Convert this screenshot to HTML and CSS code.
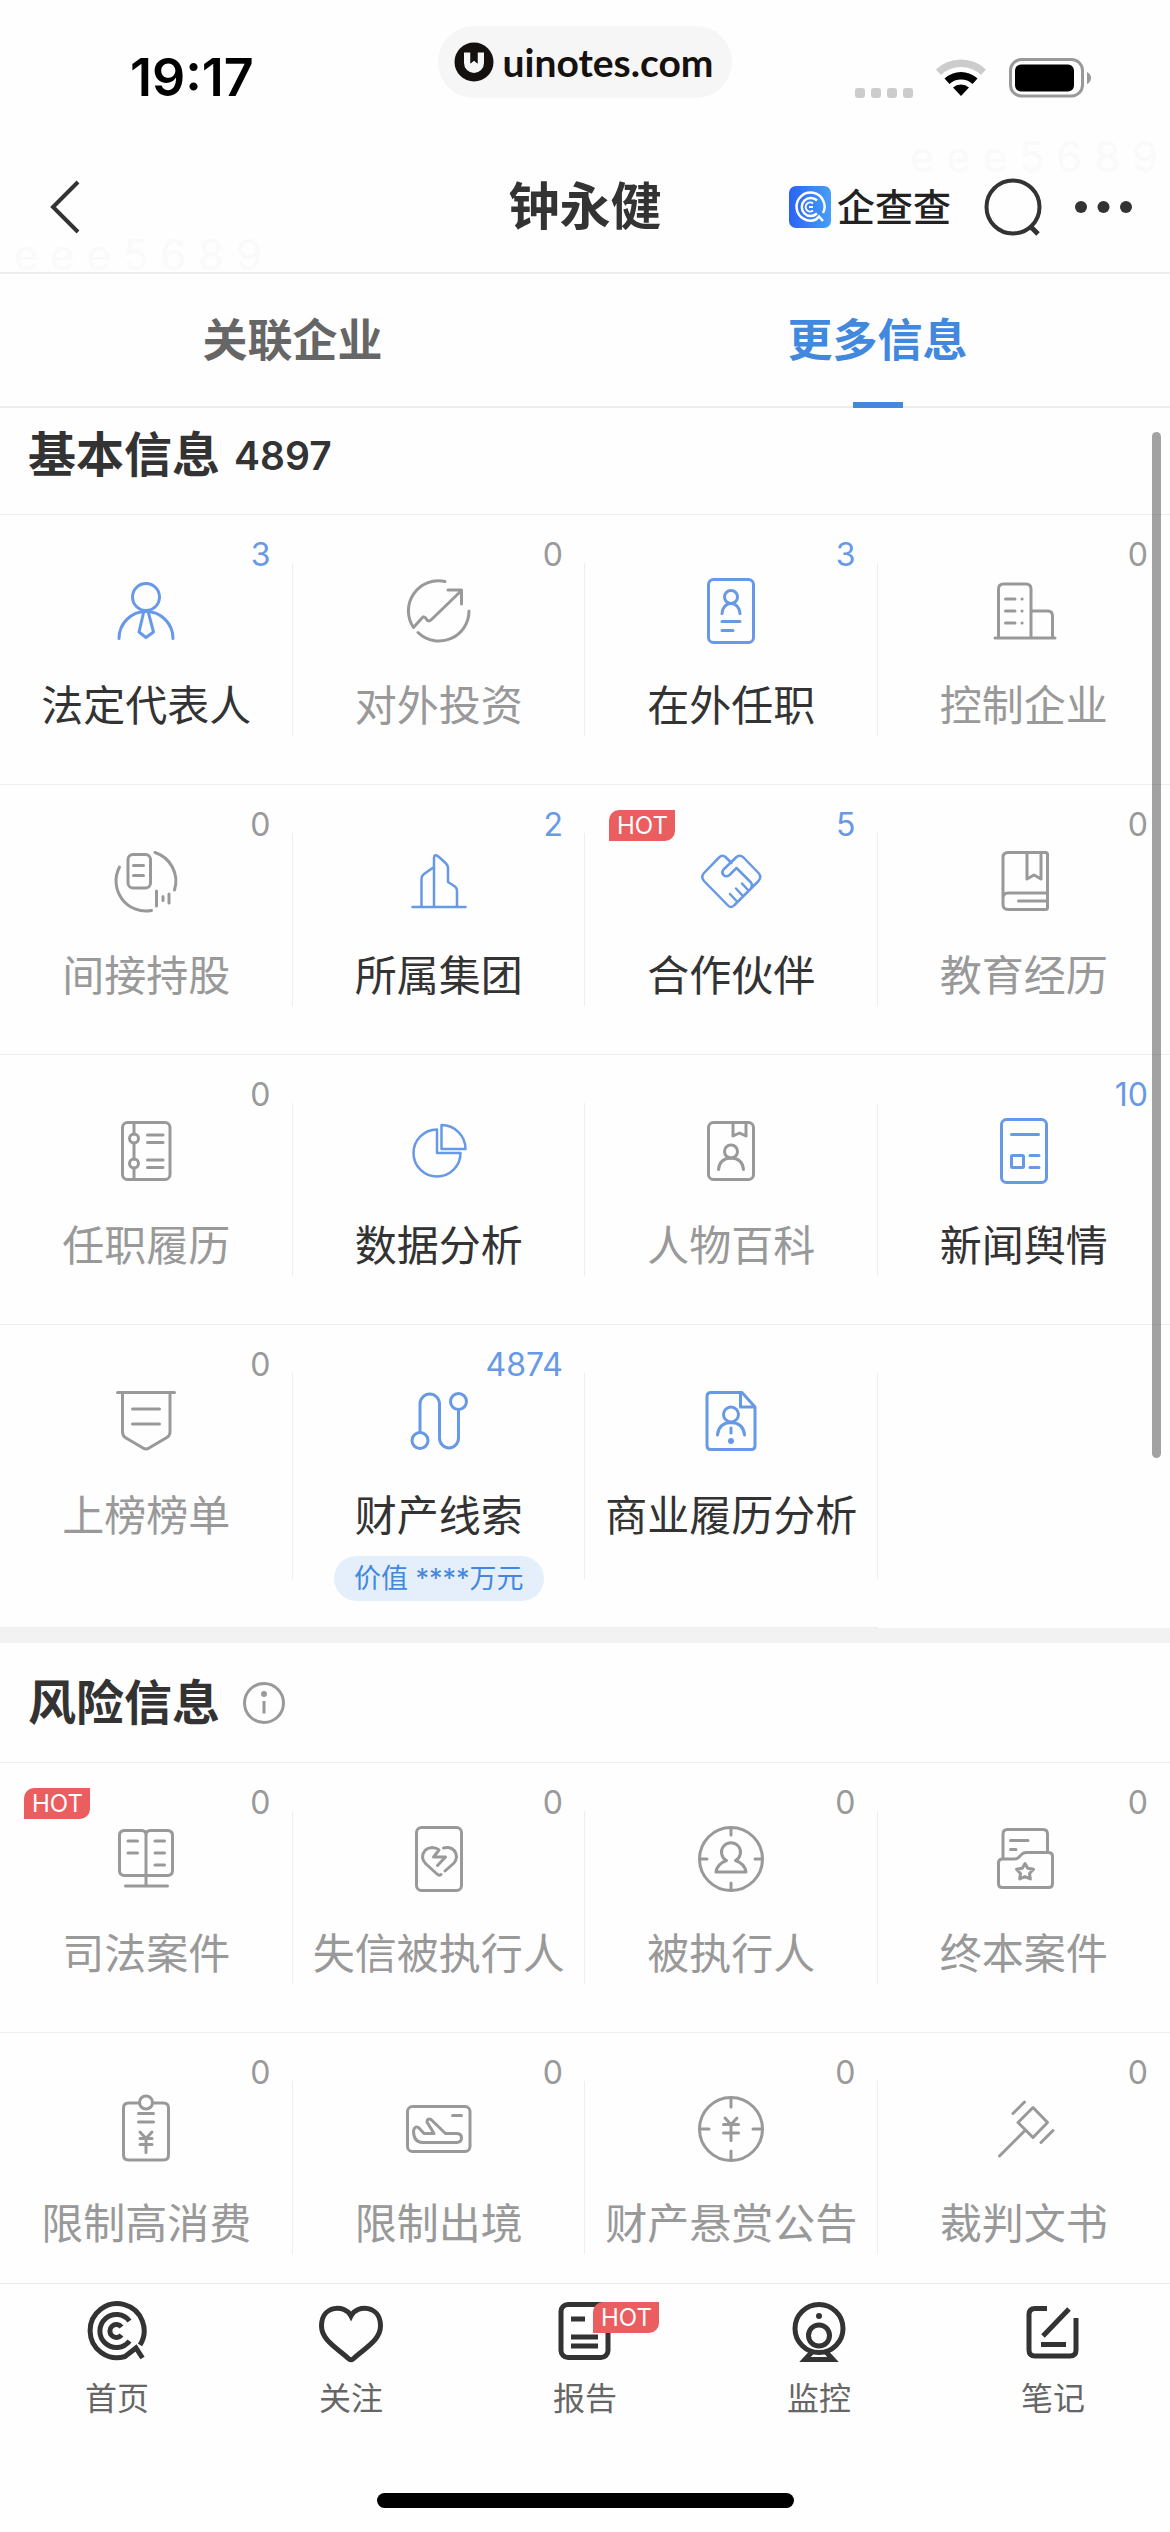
FILE: index.html
```html
<!DOCTYPE html>
<html lang="zh-CN">
<head>
<meta charset="utf-8">
<meta name="viewport" content="width=device-width, initial-scale=1">
<title>钟永健 - 更多信息</title>
<link rel="stylesheet" href="styles.css">
</head>
<body>
<div class="app">
  <div class="status">
    <span class="status-time">19:17</span>
    <div class="pill">
      <svg class="pill-logo" width="40" height="40" viewBox="0 0 40 40" aria-hidden="true"><circle cx="20" cy="20" r="19.500" fill="#15110f"/><path d="M10 10.500h6.500v11l3.500-3 3.500 3v-11H30V21a10 10 0 0 1-20 0z" fill="#f6f6f6"/><path d="M16.500 10h7v11.500l-3.500-3-3.500 3z" fill="#15110f"/></svg>
      <span>uinotes.com</span>
    </div>
    <div class="status-icons">
      <svg class="signal" width="58" height="10" viewBox="0 0 58 10" fill="#ccc" aria-hidden="true"><rect width="10" height="10" rx="3"/><rect x="16" width="10" height="10" rx="3"/><rect x="32" width="10" height="10" rx="3"/><rect x="48" width="10" height="10" rx="3"/></svg>
      <svg width="50" height="38" viewBox="0 0 50 38" aria-hidden="true"><path d="M0 10.500A36 36 0 0 1 50 10.500L45 16A29 29 0 0 0 5 16Z" fill="#ccc"/><path d="M8.500 19.500A24 24 0 0 1 41.500 19.500L36.500 25A17 17 0 0 0 13.500 25Z"/><path d="M17 28.500A12 12 0 0 1 33 28.500L25 37Z"/></svg>
      <svg width="83" height="40" viewBox="0 0 83 40" aria-hidden="true"><rect x="1.500" y="1.500" width="72" height="36.500" rx="11" fill="none" stroke="#999" stroke-width="3"/><rect x="6" y="6.500" width="59" height="27" rx="6"/><path d="M78 14q4 2 4 6t-4 6z" fill="#999"/></svg>
    </div>
  </div>

  <header class="nav">
    <button class="icon-btn back" type="button" aria-label="返回"><svg width="30" height="54" viewBox="0 0 30 54"><path d="M28 2 3 27 28 52"/></svg></button>
    <h1 class="nav-title">钟永健</h1>
    <div class="nav-actions">
      <a class="brand" href="#">
        <svg width="42" height="42" viewBox="0 0 42 42" aria-hidden="true"><defs><linearGradient id="brand-bg" x1="0" x2="1"><stop offset="0" stop-color="#2b63f3"/><stop offset="1" stop-color="#479ef8"/></linearGradient></defs><rect width="42" height="42" rx="7" fill="url(#brand-bg)"/><g fill="none" stroke="#fff" stroke-width="2.500"><path d="M34 27A14 14 0 1 0 27 33.500l3-3 4 4.500"/><path d="M28 14.500a9 9 0 1 0 0 13"/><path d="M24 17.500a4.500 4.500 0 1 0 0 7M20 21h4" stroke-width="2"/></g></svg>
        <span>企查查</span>
      </a>
      <button class="icon-btn" type="button" aria-label="搜索"><svg width="58" height="58" viewBox="0 0 58 58"><circle cx="29" cy="29" r="26.500"/><path d="M47 49l7 7" stroke-width="5"/></svg></button>
      <button class="icon-btn" type="button" aria-label="更多"><svg width="57" height="12" viewBox="0 0 57 12" class="dots"><circle cx="6" cy="6" r="6"/><circle cx="28.500" cy="6" r="6"/><circle cx="51" cy="6" r="6"/></svg></button>
    </div>
    <span class="watermark watermark-top" aria-hidden="true">e e e 5 6 8 9</span>
    <span class="watermark watermark-bottom" aria-hidden="true">e e e 5 6 8 9</span>
  </header>

  <nav class="tabs">
    <a class="tab" href="#">关联企业</a>
    <a class="tab is-active" href="#" aria-current="page">更多信息</a>
  </nav>

  <div class="body">
  <main class="content">
    <section>
      <div class="section-head section-head-first"><h2>基本信息</h2><span class="section-count">4897</span></div>
      <div class="grid">
        <a class="tile is-on" href="#"><span class="count">3</span><svg class="icon" viewBox="0 0 72 72"><circle cx="36" cy="22" r="13.500"/><path d="M9 63.500a27 27 0 0 1 54 0M33.500 38 29 57l7 5.500 7.500-5.500-5-19"/></svg><span class="label">法定代表人</span></a>
        <a class="tile" href="#"><span class="count">0</span><svg class="icon" viewBox="0 0 72 72"><path d="M42 6.500A30 30 0 0 0 10.500 52.500L19 43Q21 40.500 23 43.500 25.500 48 29 44L58 16M45 15h13.500v14M66 36A30 30 0 0 1 15 57.500"/></svg><span class="label">对外投资</span></a>
        <a class="tile is-on" href="#"><span class="count">3</span><svg class="icon" viewBox="0 0 72 72"><rect x="13.500" y="4.500" width="45" height="63" rx="5"/><circle cx="36" cy="22" r="6.500"/><path d="M27 38.500a9 10 0 0 1 18 0M27 46.500h18M27 55.500h11"/></svg><span class="label">在外任职</span></a>
        <a class="tile" href="#"><span class="count">0</span><svg class="icon" viewBox="0 0 72 72"><path d="M10.500 63V14q0-5 5-5H38q5 0 5 5v49M7 63h60M43 36h17q4.500 0 4.500 5v22M17.500 24H27M17.500 36H27M17.500 48H27M34 24h.1M34 36h.1M34 48h.1"/></svg><span class="label">控制企业</span></a>

        <a class="tile" href="#"><span class="count">0</span><svg class="icon" viewBox="0 0 72 72"><path d="M45 7.500A30 30 0 0 1 64.500 45M9.500 22A30 30 0 0 0 41.500 65.500M23.500 20.500h10M23.500 30.500h10M46.500 46v15M53 51.500v4M59 49v9"/><rect x="18" y="9.500" width="22.500" height="33.500" rx="5"/></svg><span class="label">间接持股</span></a>
        <a class="tile is-on" href="#"><span class="count">2</span><svg class="icon" viewBox="0 0 72 72"><path class="thin" d="M9.500 62h53M18.500 62V34q0-3 2.500-5l10-7M31 62V14Q31 7.500 36 12l7 6.500q2 2 2 4.500v14l7 4.500q2 1.500 2 4.500v16"/></svg><span class="label">所属集团</span></a>
        <a class="tile is-on" href="#"><span class="hot hot-tile">HOT</span><span class="count">5</span><svg class="icon" viewBox="0 0 72 72"><path class="thin" d="M36.500 18 31 12.500q-3.500-3.500-7 0L9 28q-3.500 4 0 8l23.500 24q3.500 4 7 0l24-24q3.500-4 0-8l-15-15.500q-4-3.500-7.500 0l-12.500 12q-2.500 3 0 5.500 3 2.500 6 0l7-7L56 37.500q2 2.500 0 6M47 38.500l6 6.500M41 43.500l6 6.500M35 49l6 6.500"/></svg><span class="label">合作伙伴</span></a>
        <a class="tile" href="#"><span class="count">0</span><svg class="icon" viewBox="0 0 72 72"><path d="M20 7.500h37.500q2 0 2 2v53q0 2-2 2H20q-5 0-5-5v-47q0-5 5-5zM15 53q0-5 5-5h39.500M30.500 56H59M39 8v26l7-4 7 4V8"/></svg><span class="label">教育经历</span></a>

        <a class="tile" href="#"><span class="count">0</span><svg class="icon" viewBox="0 0 72 72"><rect x="12.500" y="7.500" width="47.500" height="57" rx="5"/><circle cx="24" cy="23.500" r="4.500"/><circle cx="24" cy="48.500" r="4.500"/><path d="M24 8v11M24 28v16M24 53v11M37.500 20H53M37.500 27.500H53M37.500 45H53M37.500 52.500H53"/></svg><span class="label">任职履历</span></a>
        <a class="tile is-on" href="#"><svg class="icon" viewBox="0 0 72 72"><path class="thin" d="M34 14.500A23.500 23.500 0 1 0 57.500 38H34ZM38.500 10v24h24A24 24 0 0 0 38.500 10Z"/></svg><span class="label">数据分析</span></a>
        <a class="tile" href="#"><svg class="icon" viewBox="0 0 72 72"><rect x="13.500" y="7.500" width="45" height="57" rx="5"/><circle cx="36" cy="36.500" r="6.500"/><path d="M23.500 54.500q1-11 12.500-11.500 11.500.5 12.500 11.500M38 8v13l6.500-3 6.500 3V8"/></svg><span class="label">人物百科</span></a>
        <a class="tile is-on" href="#"><span class="count">10</span><svg class="icon" viewBox="0 0 72 72"><rect x="13.500" y="4.500" width="45" height="63" rx="5"/><rect x="23.500" y="40.500" width="12" height="12" rx="1"/><path d="M23.500 19.500h27M42 40.500h9M42 52.500h9"/></svg><span class="label">新闻舆情</span></a>

        <a class="tile" href="#"><span class="count">0</span><svg class="icon" viewBox="0 0 72 72"><path d="M7.500 7.500h57M12.500 7.500V47q0 4 3.500 6l17 10q3 2 6 0l17-10q4-2 4-6V7.500M22.500 24h27M22.500 39h27"/></svg><span class="label">上榜榜单</span></a>
        <a class="tile is-on" href="#"><span class="count">4874</span><svg class="icon" viewBox="0 0 72 72"><circle cx="55.500" cy="16.500" r="8"/><circle cx="17" cy="55.500" r="8"/><path d="M17 47.500V19a9.750 10 0 0 1 19.500 0v34a9.500 10 0 0 0 19 0V24.500"/></svg><span class="label">财产线索</span><span class="tag">价值 ****万元</span></a>
        <a class="tile is-on" href="#"><svg class="icon" viewBox="0 0 72 72"><path d="M47 7.500H16q-4 0-4 4v49q0 4 4 4h40q4 0 4-4V22ZM45.500 8v14H60M36 43v5M22.500 50q1-12 13.500-12.500 12.500.5 13.500 12.500"/><circle cx="36" cy="29.500" r="7.500"/><circle class="solid" cx="36" cy="56" r="3"/></svg><span class="label">商业履历分析</span></a>
      </div>
    </section>

    <section class="section-next">
      <div class="section-head"><h2>风险信息</h2><button class="icon-btn info" type="button" aria-label="说明"><svg width="44" height="44" viewBox="0 0 44 44"><circle cx="22" cy="22" r="19.500"/><circle class="solid" cx="22" cy="13" r="3"/><path d="M22 20v12.500"/></svg></button></div>
      <div class="grid">
        <a class="tile" href="#"><span class="hot hot-tile">HOT</span><span class="count">0</span><svg class="icon" viewBox="0 0 72 72"><path d="M36 12q0-4.500-4.500-4.500h-17q-5 0-5 5v35q0 5 5 5h43q5 0 5-5v-35q0-5-5-5h-17q-4.500 0-4.500 4.500v51M15.500 63h42M18 18h9.500M18 30h9.500M45 18h9.500M45 30h9.500M45 42h9.500"/></svg><span class="label">司法案件</span></a>
        <a class="tile" href="#"><span class="count">0</span><svg class="icon" viewBox="0 0 72 72"><rect x="13.500" y="4.500" width="45" height="63" rx="5"/><path d="M36 27q-3-2.500-7-2.500-9.500 1-9.500 10 .5 3.500 3 6L34 51q2 2 4 .5M36 27l-5.500 7h12l-8 8.500M40.500 25q2.500-.8 5-.5 7.500 1.500 8 9.500-.5 4-2.500 6l-9 8"/></svg><span class="label">失信被执行人</span></a>
        <a class="tile" href="#"><span class="count">0</span><svg class="icon" viewBox="0 0 72 72"><circle cx="36" cy="36" r="31.500"/><path d="M36 5v7M36 60v7M5 36h7M60 36h7M31.500 37.500a9.500 9.500 0 1 1 9 0Q50 41 51 49H21q1-8 10.500-11.500z"/></svg><span class="label">被执行人</span></a>
        <a class="tile" href="#"><span class="count">0</span><svg class="icon" viewBox="0 0 72 72"><path d="M15 35V11q0-4.500 4.500-4.500H55q4.500 0 4.500 4.500v18M22.500 17.500H40M22.500 26.500h5.500M14.500 36h12q2.500 0 4-1.500l3-3q2-2 4.500-2h22.500q4 0 4 4v27q0 4-4 4h-46q-4 0-4-4V40q0-4 4-4zM37 40.500l2.700 4.800 5.800 1-4 4.200.8 5.500-5.300-2.400-5.300 2.400.8-5.500-4-4.200 5.800-1z"/></svg><span class="label">终本案件</span></a>

        <a class="tile" href="#"><span class="count">0</span><svg class="icon" viewBox="0 0 72 72"><path d="M29 10H18.500q-5 0-5 5v47q0 5 5 5h35q5 0 5-5V15q0-5-5-5H43M28.500 20.500h15M28.500 29h15M30 39l6 6.500 6-6.500M30 45.500h12M30 51.500h12M36 45.500V59.500"/><circle cx="36" cy="9.500" r="6.500"/></svg><span class="label">限制高消费</span></a>
        <a class="tile" href="#"><span class="count">0</span><svg class="icon" viewBox="0 0 72 72"><rect x="4.500" y="13.500" width="62.500" height="45" rx="5"/><path d="M49.500 22.500h9M10.500 38q1-5.500 5-3.500l5.500 6h10L24 29q0-4 4-2.500l14.500 14H54q4.500.500 4.500 4.500T54 49.500H19.500q-9-.500-9-11.500z"/></svg><span class="label">限制出境</span></a>
        <a class="tile" href="#"><span class="count">0</span><svg class="icon" viewBox="0 0 72 72"><circle cx="36" cy="36" r="31.500"/><path d="M36 5v9M36 58v9M5 36h9M58 36h9M30 25l6 6.500 6-6.500M28.500 31.500h15M28.500 40h15M36 31.500v16"/></svg><span class="label">财产悬赏公告</span></a>
        <a class="tile" href="#"><span class="count">0</span><svg class="icon" viewBox="0 0 72 72"><path d="M45 14.500 59.500 29.500 45 44.500 30 29.500zM36.500 38 11.500 63M36.500 9 25 20.500M65 37.500 53 49.500"/></svg><span class="label">裁判文书</span></a>
      </div>
    </section>
  </main>
  <div class="scrollbar" aria-hidden="true"></div>
  </div>

  <footer class="dock">
    <nav class="dock-items">
      <a class="dock-item" href="#"><svg class="dock-icon" viewBox="0 0 64 64"><path d="M55 46A27 27 0 1 0 40 57.500l11-8.500 6.500 10M44.500 22a16.500 16.500 0 1 0 0 20M36.500 28a6.500 6.500 0 1 0 0 8"/></svg><span>首页</span></a>
      <a class="dock-item" href="#"><svg class="dock-icon" viewBox="0 0 64 64"><path d="M32 17C26 5 2.500 6 2.500 27 2.500 41 18 49 30 60q2 1.500 4 0C46 49 61.500 41 61.500 27 61.500 6 38 5 32 17Z"/></svg><span>关注</span></a>
      <a class="dock-item" href="#"><svg class="dock-icon" viewBox="0 0 64 64"><rect x="8" y="5.500" width="47" height="53" rx="7"/><path d="M18 20h14M18 38h27M18 47h27"/></svg><span>报告</span><span class="hot hot-dock">HOT</span></a>
      <a class="dock-item" href="#"><svg class="dock-icon" viewBox="0 0 64 64"><circle cx="32" cy="29.500" r="24"/><circle cx="32" cy="36.500" r="10.500"/><circle class="solid" cx="32" cy="17" r="3"/><path d="M25 53l-7 7.500h28L39 53"/></svg><span>监控</span></a>
      <a class="dock-item" href="#"><svg class="dock-icon" viewBox="0 0 64 64"><path d="M26 9.500H14q-6 0-6 6v35.500q0 6 6 6h35q6 0 6-6V19M48 10 22 37M20 45.500h25"/></svg><span>笔记</span></a>
    </nav>
    <div class="home-bar" aria-hidden="true"></div>
  </footer>
</div>
</body>
</html>
```

FILE: styles.css
```css
* { box-sizing: border-box; }

body {
  margin: 0;
  background: #fefefe;
  color: #333;
  font-family: "Inter", "Noto Sans CJK SC", sans-serif;
}

a { color: inherit; text-decoration: none; }
h1, h2 { margin: 0; }
svg { display: block; flex: none; }

.app {
  display: flex;
  flex-direction: column;
  height: 100vh;
  overflow: hidden;
}

/* Status bar */
.status {
  display: grid;
  grid-template-columns: 1fr auto 1fr;
  align-items: center;
  height: 142px;
  padding-top: 14px;
  flex: none;
  color: #000;
}
.status-time {
  padding-left: 130px;
  font-size: 52px;
  font-weight: 600;
  line-height: 60px;
}
.pill {
  display: flex;
  align-items: center;
  align-self: start;
  gap: 8px;
  height: 72px;
  margin-top: 12px;
  padding: 0 18px 0 16px;
  border-radius: 36px;
  background: #f6f6f6;
  color: #15110f;
  font-family: "Lato", sans-serif;
  font-size: 39px;
  font-weight: 700;
}
.status-icons {
  display: flex;
  align-items: center;
  justify-content: flex-end;
  gap: 23px;
  padding-right: 78px;
}
.signal { align-self: flex-end; }

/* Title bar */
.nav {
  position: relative;
  display: grid;
  grid-template-columns: 1fr auto 1fr;
  align-items: center;
  height: 132px;
  flex: none;
  border-bottom: 2px solid #ededed;
}
.nav-title {
  font-size: 51px;
  font-weight: 700;
  line-height: 60px;
}
.icon-btn {
  padding: 0;
  border: 0;
  background: none;
  color: #333;
}
.icon-btn svg {
  fill: none;
  stroke: currentColor;
  stroke-width: 4;
}
.icon-btn .dots { fill: currentColor; stroke: none; }
.back { justify-self: start; margin-left: 50px; }
.nav-actions {
  display: flex;
  align-items: center;
  justify-content: flex-end;
  gap: 33px;
  padding-right: 38px;
}
.brand {
  display: flex;
  align-items: center;
  gap: 6px;
  color: #222;
  font-size: 38px;
  font-weight: 500;
  line-height: 42px;
}
.watermark {
  position: absolute;
  color: #fafafa;
  font-size: 42px;
  line-height: 42px;
  white-space: nowrap;
  pointer-events: none;
}
.watermark-top { right: 12px; top: -6px; }
.watermark-bottom { left: 14px; bottom: -4px; }

/* Tabs */
.tabs {
  display: grid;
  grid-template-columns: 1fr 1fr;
  flex: none;
  border-bottom: 2px solid #ededed;
}
.tab {
  position: relative;
  padding: 37px 0 35px;
  color: #666;
  font-size: 45px;
  font-weight: 700;
  line-height: 60px;
  text-align: center;
}
.tab.is-active { color: #4188df; }
.tab.is-active::after {
  content: "";
  position: absolute;
  left: 50%;
  bottom: -2px;
  width: 50px;
  height: 6px;
  margin-left: -25px;
  background: #4188df;
}

/* Scrolling body */
.body {
  position: relative;
  flex: 1;
  min-height: 0;
}
.content { height: 100%; overflow: hidden; }
.scrollbar {
  position: absolute;
  top: 24px;
  right: 9px;
  width: 9px;
  height: 1026px;
  border-radius: 5px;
  background: rgba(0, 0, 0, 0.36);
}

.section-next { border-top: 15px solid #f2f2f2; }
.section-head {
  display: flex;
  align-items: center;
  gap: 14px;
  padding: 30px 28px 29px;
  border-bottom: 1px solid #eee;
}
.section-head-first { padding-top: 17px; }
.section-head h2 {
  font-size: 48px;
  font-weight: 700;
  line-height: 60px;
}
.section-count {
  padding-top: 2px;
  font-size: 39px;
  font-weight: 600;
  line-height: 58px;
}
.info { margin-left: 8px; color: #999; }
.info svg { stroke-width: 3; }

.grid {
  display: grid;
  grid-template-columns: repeat(4, 1fr);
}
.tile {
  position: relative;
  display: flex;
  flex-direction: column;
  align-items: center;
  min-height: 270px;
  padding: 60px 0 26px;
  border-bottom: 1px solid #eee;
  color: #999;
}
.tile:not(:nth-child(4n))::after {
  content: "";
  position: absolute;
  top: 48px;
  right: 0;
  bottom: 48px;
  width: 1px;
  background: #eee;
}
.icon {
  width: 72px;
  height: 72px;
  margin-bottom: 29px;
  fill: none;
  stroke: currentColor;
  stroke-width: 3;
  stroke-linecap: round;
  stroke-linejoin: round;
}
.icon .thin { stroke-width: 2.5; }
.solid { fill: currentColor; stroke: none; }
.is-on .icon,
.is-on .count { color: #6799e6; }
.label {
  font-size: 42px;
  line-height: 60px;
  white-space: nowrap;
}
.is-on .label { color: #333; }
.count {
  position: absolute;
  top: 20px;
  right: 22px;
  font-size: 32px;
  line-height: 40px;
}
.tag {
  z-index: 1;
  margin-top: 10px;
  padding: 0 20px;
  border-radius: 23px;
  background: #e5effb;
  color: #4188df;
  font-size: 27px;
  line-height: 45px;
}
.hot {
  position: absolute;
  padding: 0 7px 0 8px;
  background: #ea5e60;
  color: #fff;
  font-size: 24px;
  line-height: 31px;
}
.hot-tile { left: 24px; top: 25px; border-radius: 10px 0 10px 0; }

/* Bottom dock */
.dock {
  flex: none;
  padding-bottom: 24px;
  border-top: 1px solid #eaeaea;
}
.dock-items {
  display: grid;
  grid-template-columns: repeat(5, 1fr);
}
.dock-item {
  position: relative;
  display: flex;
  flex-direction: column;
  align-items: center;
  gap: 16px;
  padding-top: 15px;
  color: #666;
  font-size: 32px;
  line-height: 40px;
}
.dock-icon {
  width: 64px;
  height: 64px;
  color: #333;
  fill: none;
  stroke: currentColor;
  stroke-width: 5;
}
.hot-dock { left: 50%; top: 18px; margin-left: 8px; border-radius: 10px 0 10px 0; }
.home-bar {
  width: 417px;
  height: 15px;
  margin: 74px auto 0;
  border-radius: 8px;
  background: #000;
}
```
